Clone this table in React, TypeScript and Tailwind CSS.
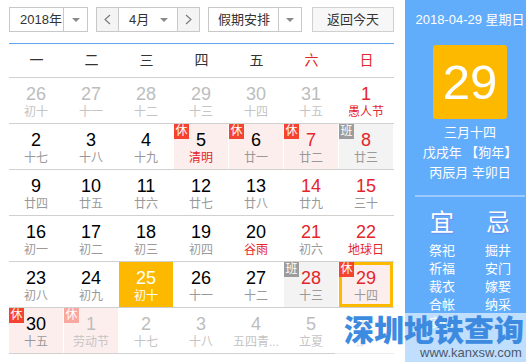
import React from 'react'

type Day = {
  n: number
  l: string
  other?: boolean
  red?: boolean
  fest?: boolean
  tag?: '休' | '班'
  today?: boolean
  sel?: boolean
}

const weeks: Day[][] = [
  [
    { n: 26, l: '初十', other: true },
    { n: 27, l: '十一', other: true },
    { n: 28, l: '十二', other: true },
    { n: 29, l: '十三', other: true },
    { n: 30, l: '十四', other: true },
    { n: 31, l: '十五', other: true },
    { n: 1, l: '愚人节', red: true, fest: true },
  ],
  [
    { n: 2, l: '十七' },
    { n: 3, l: '十八' },
    { n: 4, l: '十九' },
    { n: 5, l: '清明', fest: true, tag: '休' },
    { n: 6, l: '廿一', tag: '休' },
    { n: 7, l: '廿二', red: true, tag: '休' },
    { n: 8, l: '廿三', red: true, tag: '班' },
  ],
  [
    { n: 9, l: '廿四' },
    { n: 10, l: '廿五' },
    { n: 11, l: '廿六' },
    { n: 12, l: '廿七' },
    { n: 13, l: '廿八' },
    { n: 14, l: '廿九', red: true },
    { n: 15, l: '三十', red: true },
  ],
  [
    { n: 16, l: '初一' },
    { n: 17, l: '初二' },
    { n: 18, l: '初三' },
    { n: 19, l: '初四' },
    { n: 20, l: '谷雨', fest: true },
    { n: 21, l: '初六', red: true },
    { n: 22, l: '地球日', red: true, fest: true },
  ],
  [
    { n: 23, l: '初八' },
    { n: 24, l: '初九' },
    { n: 25, l: '初十', today: true },
    { n: 26, l: '十一' },
    { n: 27, l: '十二' },
    { n: 28, l: '十三', red: true, tag: '班' },
    { n: 29, l: '十四', red: true, tag: '休', sel: true },
  ],
  [
    { n: 30, l: '十五', tag: '休' },
    { n: 1, l: '劳动节', other: true, tag: '休' },
    { n: 2, l: '十七', other: true },
    { n: 3, l: '十八', other: true },
    { n: 4, l: '五四青...', other: true },
    { n: 5, l: '立夏', other: true },
    { n: 6, l: '廿一', other: true },
  ],
]

const Caret = () => (
  <span className="w-0 h-0 border-l-[4px] border-r-[4px] border-t-[4px] border-l-transparent border-r-transparent border-t-[#8a8a8a]" />
)

const Chevron = ({ right }: { right?: boolean }) => (
  <svg width="7" height="11" viewBox="0 0 7 11">
    <polyline
      points={right ? '1,1 6,5.5 1,10' : '6,1 1,5.5 6,10'}
      fill="none"
      stroke="#777"
      strokeWidth="1.1"
    />
  </svg>
)

const Cell = ({ d }: { d: Day }) => {
  let bg = ''
  if (d.today) bg = 'bg-[#fdb900]'
  else if (d.tag === '休') bg = 'bg-[#fdeeee]'
  else if (d.tag === '班') bg = 'bg-[#f3f3f3]'

  const numColor = d.today
    ? 'text-white'
    : d.other
    ? 'text-[#bdbdbd]'
    : d.red
    ? 'text-[#e3262b]'
    : 'text-black'
  const lunarColor = d.today
    ? 'text-white'
    : d.other
    ? 'text-[#c4c4c4]'
    : d.fest
    ? 'text-[#e3262b]'
    : 'text-[#999]'

  let badge = ''
  if (d.tag === '班') badge = 'bg-[#9c9c9c]'
  else if (d.tag === '休') badge = d.other ? 'bg-[#f9a8a0]' : 'bg-[#f4432f]'

  return (
    <div className="relative pr-px h-[45px]">
      <div
        className={`h-full text-center ${bg} ${
          d.sel ? 'border-[3px] border-[#fdb900] pt-[3px]' : 'pt-[6px]'
        }`}
      >
        <div className={`text-[18px] leading-[20px] ${numColor}`}>{d.n}</div>
        <div className={`text-[12px] leading-[16px] whitespace-nowrap ${lunarColor}`}>{d.l}</div>
      </div>
      {d.tag && (
        <span
          className={`absolute top-0 left-0 w-[15px] h-[15px] text-[12px] leading-[15px] text-center text-white ${badge}`}
        >
          {d.tag}
        </span>
      )}
    </div>
  )
}

const yi = ['祭祀', '祈福', '裁衣', '合帐', '安床']
const ji = ['掘井', '安门', '嫁娶', '纳采']

export default function App() {
  return (
    <div className="relative flex w-[526px] h-[362px] overflow-hidden bg-white font-['Liberation_Sans','Noto_Sans_CJK_SC',sans-serif]">
      {/* calendar */}
      <div className="w-[405px] shrink-0 pl-[9px] pr-[11px]">
        <div className="h-[43px] pt-[7px] flex text-[13px] text-[#333]">
          <div className="flex h-[25px] w-[79px] border border-[#c8c8c8]">
            <div className="flex-1 pl-[10px] leading-[23px]">2018年</div>
            <div className="w-[24px] border-l border-[#c8c8c8] flex items-center justify-center">
              <Caret />
            </div>
          </div>
          <div className="ml-[8px] flex h-[25px] w-[104px] border border-[#c8c8c8]">
            <div className="w-[22px] bg-[#f4f4f4] border-r border-[#c8c8c8] flex items-center justify-center">
              <Chevron />
            </div>
            <div className="flex-1 flex items-center pl-[10px] pr-[9px]">
              <span className="flex-1 leading-[23px]">4月</span>
              <Caret />
            </div>
            <div className="w-[22px] bg-[#f4f4f4] border-l border-[#c8c8c8] flex items-center justify-center">
              <Chevron right />
            </div>
          </div>
          <div className="ml-[8px] flex h-[25px] w-[94px] border border-[#c8c8c8]">
            <div className="flex-1 pl-[9px] leading-[23px]">假期安排</div>
            <div className="w-[23px] border-l border-[#c8c8c8] flex items-center justify-center">
              <Caret />
            </div>
          </div>
          <div className="ml-[10px] h-[25px] w-[82px] border border-[#d0d0d0] bg-[#f7f7f7] text-center leading-[23px]">
            返回今天
          </div>
        </div>

        <div className="h-px bg-[#64a4ea]" />
        <div className="h-[34px] grid grid-cols-7 items-center text-center text-[14px] text-[#333] border-b border-[#d0d0d0]">
          {['一', '二', '三', '四', '五'].map(w => (
            <div key={w}>{w}</div>
          ))}
          <div className="text-[#e3262b]">六</div>
          <div className="text-[#e3262b]">日</div>
        </div>

        {weeks.map((week, i) => (
          <div key={i} className="grid grid-cols-7 border-b border-[#d0d0d0]">
            {week.map((d, j) => (
              <Cell key={j} d={d} />
            ))}
          </div>
        ))}
      </div>

      {/* side panel */}
      <div className="w-[130px] shrink-0 bg-[#62acfc] text-white flex flex-col items-center pt-[12px]">
        <div className="text-[13px] leading-[16px] whitespace-nowrap">2018-04-29 星期日</div>
        <div className="mt-[17px] w-[74px] h-[74px] rounded-[3px] bg-[#fdb900] flex items-center justify-center text-[49px] leading-none">
          29
        </div>
        <div className="mt-[4px] text-[13px] leading-[20px] text-center">
          <div>三月十四</div>
          <div>戊戌年 【狗年】</div>
          <div>丙辰月 辛卯日</div>
        </div>
        <div className="mt-[12px] self-stretch mx-[10px] h-[2px] bg-[#9ccafd]" />
        <div className="mt-[12px] flex gap-[16px]">
          <div className="w-[40px] flex flex-col items-center">
            <div className="text-[24px] leading-[28px] [text-shadow:1px_1px_1px_rgba(120,90,200,0.35)]">宜</div>
            <div className="mt-[5px] text-[13px] leading-[18px] flex flex-col items-center">
              {yi.map(t => (
                <div key={t}>{t}</div>
              ))}
            </div>
          </div>
          <div className="w-[40px] flex flex-col items-center">
            <div className="text-[24px] leading-[28px] [text-shadow:1px_1px_1px_rgba(120,90,200,0.35)]">忌</div>
            <div className="mt-[5px] text-[13px] leading-[18px] flex flex-col items-center">
              {ji.map(t => (
                <div key={t}>{t}</div>
              ))}
            </div>
          </div>
        </div>
      </div>

      {/* watermark */}
      <div className="absolute left-[335px] top-[313px] right-0 bottom-0 bg-white/60" />
      <div className="absolute left-[344px] top-[313px] text-[30px] leading-[36px] font-black text-[#3d8be0] whitespace-nowrap">
        深圳地铁查询
      </div>
      <div className="absolute left-[420px] top-[345px] text-[13px] leading-[16px] text-[#4d5a6b] whitespace-nowrap">
        www.kanxsw.com
      </div>
    </div>
  )
}
